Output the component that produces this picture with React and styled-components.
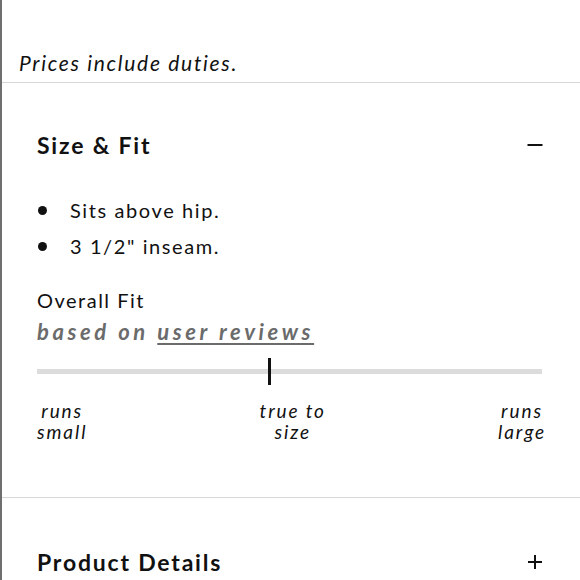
import React from "react";
import styled, { createGlobalStyle } from "styled-components";

const Global = createGlobalStyle`
  html, body { margin: 0; padding: 0; background: #fff; }
  body { font-family: Lato, "Open Sans", sans-serif; color: #111; }
`;

const Page = styled.div`
  width: 580px;
  height: 580px;
  box-sizing: border-box;
  border-left: 2px solid #6f6f6f;
  overflow: hidden;
`;

const TopNote = styled.div`
  padding: 51px 0 7px 17px;
  font-size: 21px;
  line-height: 24px;
  font-style: italic;
  letter-spacing: 1.7px;
  border-bottom: 1px solid #d6d6d6;
`;

const Section = styled.section`
  padding: ${(p) => p.$top}px 37px ${(p) => p.$bottom}px 35px;
  border-bottom: ${(p) => (p.$divider ? "1px solid #d6d6d6" : "none")};
`;

const Header = styled.div`
  display: flex;
  align-items: center;
  justify-content: space-between;
`;

const Title = styled.h2`
  margin: 0;
  font-size: 23px;
  line-height: 28px;
  font-weight: 700;
  letter-spacing: 1.8px;
`;

const Toggle = styled.svg`
  width: 16px;
  height: 16px;
  display: block;
`;

const List = styled.ul`
  list-style: none;
  margin: 33px 0 0;
  padding: 0;
`;

const Item = styled.li`
  display: flex;
  align-items: center;
  font-size: 20px;
  line-height: 36px;
  letter-spacing: 1.6px;
  &::before {
    content: "";
    width: 9px;
    height: 9px;
    border-radius: 50%;
    background: #111;
    margin: 0 23px 0 1px;
    flex: none;
  }
`;

const FitLabel = styled.div`
  margin-top: 20px;
  font-size: 20px;
  line-height: 32px;
  letter-spacing: 1.5px;
`;

const Based = styled.div`
  font-size: 22px;
  line-height: 32px;
  font-weight: 700;
  font-style: italic;
  color: #6b6b6b;
  letter-spacing: 3.6px;
`;

const ReviewsLink = styled.a`
  color: inherit;
  text-decoration: underline;
  text-underline-offset: 3px;
  text-decoration-thickness: 1.5px;
`;

const Slider = styled.div`
  position: relative;
  margin-top: 10px;
  height: 27px;
  display: flex;
  align-items: center;
  padding-right: 1px;
`;

const Track = styled.div`
  height: 5px;
  width: 100%;
  background: #dcdcdc;
`;

const Marker = styled.div`
  position: absolute;
  top: 0;
  width: 3px;
  height: 27px;
  background: #111;
`;

const Labels = styled.div`
  margin-top: 15px;
  display: flex;
  justify-content: space-between;
  margin-right: -3px;
`;

const Label = styled.div`
  font-size: 19px;
  line-height: 21px;
  font-style: italic;
  text-align: center;
  letter-spacing: 1.9px;
`;

const Minus = () => (
  <Toggle viewBox="0 0 16 16">
    <rect x="0.5" y="7" width="15" height="2" fill="#111" />
  </Toggle>
);

const Plus = () => (
  <Toggle viewBox="0 0 16 16">
    <rect x="1" y="7" width="14" height="2" fill="#111" />
    <rect x="7" y="1" width="2" height="14" fill="#111" />
  </Toggle>
);

export default function App() {
  const fit = 0.456;
  return (
    <>
      <Global />
      <Page>
        <TopNote>Prices include duties.</TopNote>
        <Section $top={48} $bottom={55} $divider>
          <Header>
            <Title>Size &amp; Fit</Title>
            <Minus />
          </Header>
          <List>
            <Item>Sits above hip.</Item>
            <Item>3 1/2" inseam.</Item>
          </List>
          <FitLabel>Overall Fit</FitLabel>
          <Based>
            based on <ReviewsLink href="#">user reviews</ReviewsLink>
          </Based>
          <Slider>
            <Track />
            <Marker style={{ left: `${fit * 100}%` }} />
          </Slider>
          <Labels>
            <Label>runs<br />small</Label>
            <Label>true to<br />size</Label>
            <Label>runs<br />large</Label>
          </Labels>
        </Section>
        <Section $top={50} $bottom={0}>
          <Header>
            <Title>Product Details</Title>
            <Plus />
          </Header>
        </Section>
      </Page>
    </>
  );
}
